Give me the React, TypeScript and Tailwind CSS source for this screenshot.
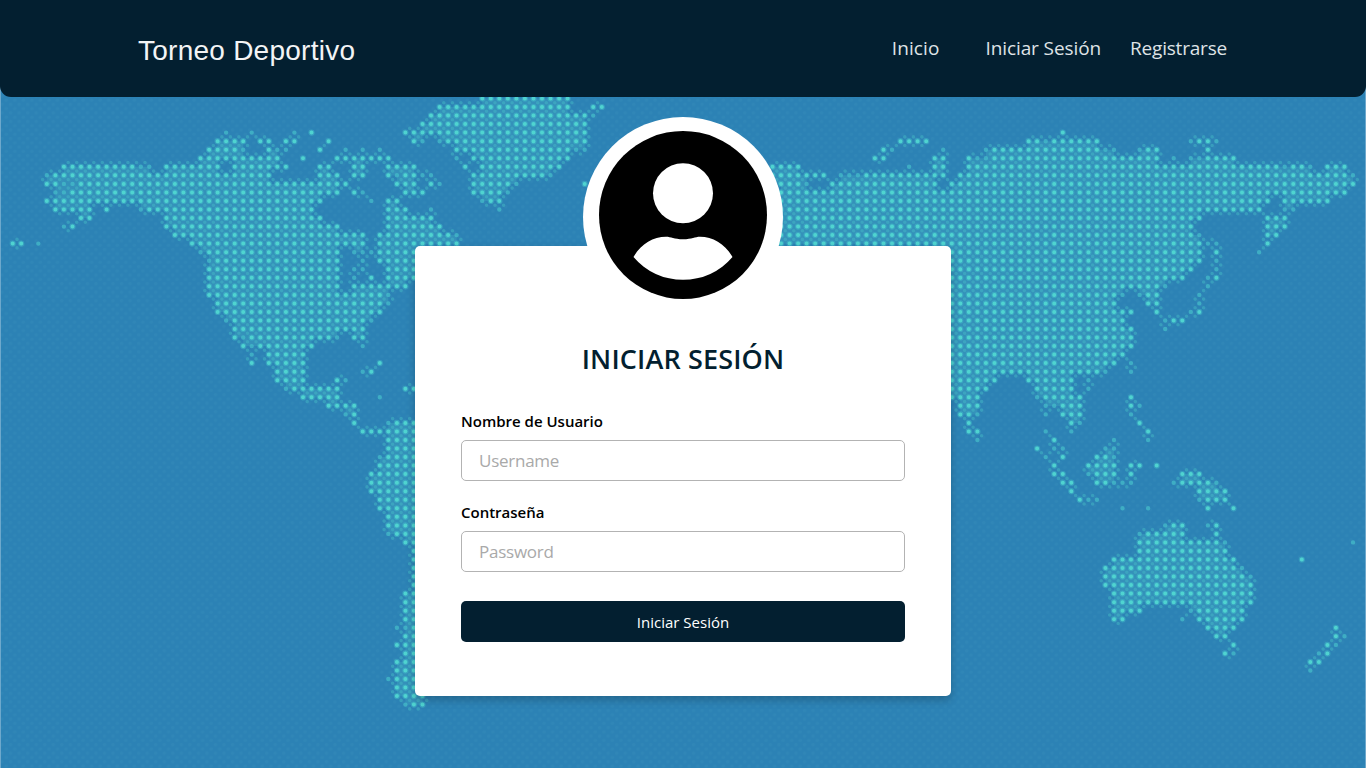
import React from "react";

const PITCH = 8.537;
const ORIGIN_X = 12.7;
const ORIGIN_Y = 98.5;

// One string per lattice row: "a-b" fills columns a to b, "c" is one dot, a trailing f is a faint dot.
const ROWS: string[] = [
  "55-65",
  "50-65 68-69",
  "49-67 68f",
  "48-67",
  "25f 28f 33f 35 46-67 123",
  "24-27 29-30 32-33 37 47 48f 50f 51-67 104-107 119-120 121f 122-127 138f 139 140 141f",
  "23-26 27f 30 31f 32f 36 39f 41f 43f 52-65 66f 67f 102 103f 109f 114f 115-127 128f 129f 132f 133-134 140",
  "22-31 34 38-44 52f 54-65 101-102 108-109 112 113f 114f 115-134 136f 138f 139f 140-143",
  "6-14 15f 16f 18-24 26-32 36-37 40-41 44-47 53 55-64 89-92 105f 108-109 112-148 149f 150-151 152f 154-156",
  "4f 5-30 36-38 40-41 44 45f 46-47 48f 49f 54-62 63f 89-95 97f 98f 99f 100-109 111-156 157f",
  "4-5 6f 7f 8-39 45-47 49 50f 54-58 59f 67 89-92 93f 96-108 110-157",
  "5f 6f 7-38 40 41f 46-48 54-57 58f 90-156",
  "4-36 42f 44-45 55f 56-57 90-147 149-154",
  "5-9 11 15f 16-35 44-46 49f 57f 90-146 149f 150f",
  "8-9 18-36 44-49 90-139 147-149",
  "6f 7 18-38 44-50 90-138 147-149",
  "19-41 43-51 52f 90-138 139f 147-148",
  "0-1 3f 21-41 43-52 90-139 140f 141f 147",
  "22f 23-38 40f 41f 42f 43-48 108-139 141 146f",
  "23f 24-38 41f 43-48 108-139 141f",
  "23-38 40f 41f 44-48 108-138 141f",
  "23-38 40f 42 44-48 108-137 140f 141",
  "23-38 40-46 108-134 135f 140f",
  "23-43 44f 108-129 130f 132f 133 134 139f",
  "24-43 44f 108-129 133-134 139f",
  "24-43 108-131 134 138f 139",
  "25f 26-41 42f 108-130 135f 136 137",
  "26-41 108-131 135f",
  "26 27f 28-37 38f 40-41 108-131",
  "27 28f 29-35 41f 108-131",
  "28f 30-34 108-130",
  "28 30-34 43 108-129 131f",
  "31-34 41f 42 108-127 128f 131f",
  "31-34 38 39f 108-115 119-124 126f",
  "32f 33-38 46-47 108-114 120-124 126f",
  "34-38 43f 108-113 120f 121-125 131",
  "37-40 111-113 121f 122f 123-125 131 132f",
  "39f 40 111-112 113f 121f 123-125 131f",
  "40 44f 45-48 112 124 125f 132",
  "41-48 112-113 121f 124f 133",
  "44-48 113f 122 129f 133f",
  "44-48 120 122f 123f 128f 129f",
  "43f 44-48 121f 123 127-128 129f",
  "43-48 122 126-129 131-132 134",
  "42-48 122-123 126f 127-129 131 137-139",
  "42-48 123-124 127-128 129f 130f 131f 136f 137-140 141f",
  "42-48 124 139-142",
  "43-48 125 126f 127f 139f 140-142",
  "43-48 130f 133f 140 143",
  "44-48",
  "44-48 135f 136-137 140f 141",
  "44f 45-48 132f 133-137 141",
  "46-48 132-141 142f 157f",
  "47-48 132-142",
  "47-48 129-143 151",
  "47-48 128-143 144f",
  "47-48 128-144 145f",
  "47-48 128-145",
  "46-48 129-145",
  "46-48 129-145",
  "46-48 129-131 132 138f 139-144",
  "46-48 129-130 137f 139-144",
  "45f 46f 47-48 140-143 155",
  "46-48 141-142 155 156f",
  "45-48 143 154 155f",
  "46-48 142 143f 154 153f",
  "45-48 152 153",
  "45-48 152f",
  "44f 45-48",
  "45-48",
  "45-48",
  "46f 47 48",
];

const key = (column: number, row: number) => row * 1000 + column;

function readLattice() {
  const strong = new Set<number>();
  const faint = new Set<number>();
  ROWS.forEach((line, row) => {
    line.split(" ").forEach((token) => {
      if (token.endsWith("f")) {
        faint.add(key(parseInt(token, 10), row));
        return;
      }
      const [from, to = from] = token.split("-").map(Number);
      for (let c = from; c <= to; c++) strong.add(key(c, row));
    });
  });
  return { strong, faint };
}

const dot = (c: number, r: number) =>
  `M${(ORIGIN_X + PITCH * c).toFixed(1)} ${(ORIGIN_Y + PITCH * r).toFixed(1)}h0`;

function buildPaths() {
  const { strong, faint } = readLattice();
  const all = new Set([...strong, ...faint]);
  let strongPath = "";
  let faintPath = "";
  let middlePath = "";
  let landPath = "";
  for (let r = -1; r < ROWS.length; r++) {
    for (let c = 0; c < 160; c++) {
      if (strong.has(key(c, r))) strongPath += dot(c, r);
      if (faint.has(key(c, r))) faintPath += dot(c, r);
      const corners = [key(c, r), key(c + 1, r), key(c, r + 1), key(c + 1, r + 1)].filter((k) => all.has(k)).length;
      if (corners >= 2) middlePath += dot(c + 0.5, r + 0.5);
      if (corners === 4) {
        const x = (ORIGIN_X + PITCH * c).toFixed(1);
        const y = (ORIGIN_Y + PITCH * r).toFixed(1);
        landPath += `M${x} ${y}h8.6v8.6h-8.6z`;
      }
    }
  }
  return { strongPath, faintPath, middlePath, landPath };
}

const MAP = buildPaths();

function WorldMap() {
  return (
    <svg className="absolute inset-0 h-full w-full" viewBox="0 0 1366 768" aria-hidden="true">
      <defs>
        <pattern id="grain" x="4.2" y="4.1" width="8.537" height="8.537" patternUnits="userSpaceOnUse">
          <circle cx="2.1" cy="2.1" r="1.7" fill="#3990ba" opacity="0.32" />
          <circle cx="6.4" cy="6.4" r="1.7" fill="#3990ba" opacity="0.32" />
        </pattern>
      </defs>
      <rect width="1366" height="768" fill="url(#grain)" />
      <path d={MAP.landPath} fill="#3b9fc0" opacity="0.5" />
      <g fill="none" strokeLinecap="round">
        <path d={MAP.middlePath} stroke="#43b8c6" strokeWidth="3.6" opacity="0.5" />
        <path d={MAP.faintPath} stroke="#46bfca" strokeWidth="4.4" opacity="0.7" />
        <path d={MAP.strongPath} stroke="#45c4cb" strokeWidth="6.2" opacity="0.45" />
        <path d={MAP.strongPath} stroke="#54dcd2" strokeWidth="4" opacity="0.85" />
      </g>
      <path d="M0.5 0V768M1365.5 0V768" stroke="#6da8cc" />
    </svg>
  );
}

function Avatar() {
  return (
    <div className="h-[200px] w-[200px] shrink-0 rounded-full bg-white">
      <svg viewBox="583 117 200 200" className="h-full w-full" aria-hidden="true">
        <circle cx="683" cy="215" r="84" fill="#000" />
        <circle cx="683" cy="193.2" r="30" fill="#fff" />
        <path
          d="M633.5 257C641 244 653 236.8 666 236.8C671 236.8 674 239.3 683 239.3C692 239.3 695 236.8 700 236.8C713 236.8 725 244 732.5 257A65 65 0 0 1 633.5 257Z"
          fill="#fff"
        />
      </svg>
    </div>
  );
}

function Field({ label, type, placeholder }: { label: string; type: string; placeholder: string }) {
  return (
    <label className="flex flex-col gap-[7px]">
      <span className="text-[15px] leading-6 font-semibold text-black">{label}</span>
      <input
        type={type}
        placeholder={placeholder}
        className="h-[41px] w-full rounded-[5px] border border-[#b3b3b3] bg-white px-[17px] text-[17px] tracking-[-0.25px] text-black outline-none placeholder:text-[#a9a9a9]"
      />
    </label>
  );
}

export default function App() {
  return (
    <div className="relative h-[768px] w-full overflow-hidden bg-[#2c82b5] font-['Open_Sans','Noto_Sans',sans-serif]">
      <WorldMap />
      <div className="relative flex h-full flex-col items-center">
        <header className="flex h-[97px] w-full shrink-0 items-center justify-between rounded-b-[11px] bg-[#031f30] pr-[139px] pl-[138px]">
          <a className="pt-1 font-['Liberation_Sans',sans-serif] text-[28px] tracking-[0.25px] text-[#f3f4f5]">
            Torneo Deportivo
          </a>
          <nav className="flex text-[19px] tracking-[-0.1px] text-[#dfe3e6]">
            <a className="mr-[46px] tracking-[0.1px]">Inicio</a>
            <a className="mr-[29px]">Iniciar Sesión</a>
            <a className="tracking-[-0.2px]">Registrarse</a>
          </nav>
        </header>
        <main className="mt-[149px] flex h-[450px] w-[536px] shrink-0 flex-col items-center rounded-[5px] bg-white px-[46px] shadow-[0_4px_8px_rgba(0,0,0,0.22)]">
          <div className="-mt-[129px]">
            <Avatar />
          </div>
          <h1 className="mt-[22px] text-[27px] leading-10 font-semibold tracking-[0.15px] whitespace-nowrap text-[#031f30]">
            INICIAR SESIÓN
          </h1>
          <form className="mt-[30px] flex w-full flex-col" onSubmit={(e) => e.preventDefault()}>
            <div className="flex flex-col gap-[19px]">
              <Field label="Nombre de Usuario" type="text" placeholder="Username" />
              <Field label="Contraseña" type="password" placeholder="Password" />
            </div>
            <button className="mt-[29px] h-[41px] w-full rounded-[5px] bg-[#031f30] pt-0.5 text-[15px] text-white">
              Iniciar Sesión
            </button>
          </form>
        </main>
      </div>
    </div>
  );
}
